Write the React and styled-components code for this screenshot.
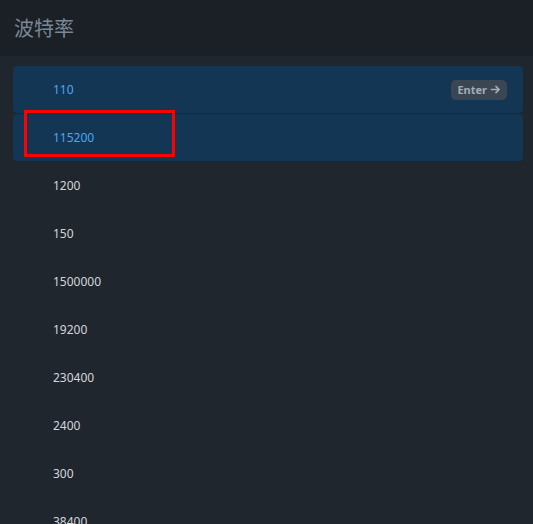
import React from "react";
import styled, { createGlobalStyle } from "styled-components";

const Global = createGlobalStyle`
  html, body { margin: 0; padding: 0; background: #20262e; }
  body { font-family: "Noto Sans", "Noto Sans CJK SC", sans-serif; overflow: hidden; }
`;

const Page = styled.div`
  width: 533px;
  height: 524px;
  background: #20262e;
  position: relative;
  overflow: hidden;
`;

const Header = styled.div`
  height: 56px;
  background: #1b1f26;
  display: flex;
  align-items: center;
  padding-left: 14px;
  box-sizing: border-box;
  font-family: "Noto Sans CJK SC", sans-serif;
  font-size: 20px;
  color: #7a8795;
  padding-bottom: 2px;
`;

const List = styled.div`
  display: flex;
  flex-direction: column;
  padding: 10px 10px 0 13px;
`;

const Row = styled.div`
  height: 47px;
  margin-bottom: 1px;
  display: flex;
  align-items: center;
  justify-content: space-between;
  padding: 0 16px 0 40px;
  border-radius: 4px;
  background: ${(p) => (p.$active ? "#133655" : "transparent")};
  color: ${(p) => (p.$active ? "#4ea6ea" : "#d2d6da")};
  font-size: 12px;
`;

const Badge = styled.span`
  display: inline-flex;
  align-items: center;
  gap: 3px;
  height: 20px;
  padding: 0 6px;
  border-radius: 5px;
  background: #3b4653;
  color: #a2acb6;
  font-size: 11px;
  font-weight: bold;
`;

const Highlight = styled.div`
  position: absolute;
  left: 24px;
  top: 110px;
  width: 145px;
  height: 41px;
  border: 3px solid #ff0000;
  pointer-events: none;
`;

const items = ["110", "115200", "1200", "150", "1500000", "19200", "230400", "2400", "300", "38400"];

export default function App() {
  return (
    <Page>
      <Global />
      <Header>波特率</Header>
      <List>
        {items.map((v, i) => (
          <Row key={v} $active={i < 2}>
            <span>{v}</span>
            {i === 0 && (
              <Badge>
                Enter
                <svg width="11" height="11" viewBox="0 0 12 12" fill="none" stroke="currentColor" strokeWidth="1.8" strokeLinecap="round" strokeLinejoin="round">
                  <path d="M1.5 6h8.5M6.5 2.5L10 6l-3.5 3.5" />
                </svg>
              </Badge>
            )}
          </Row>
        ))}
      </List>
      <Highlight />
    </Page>
  );
}
